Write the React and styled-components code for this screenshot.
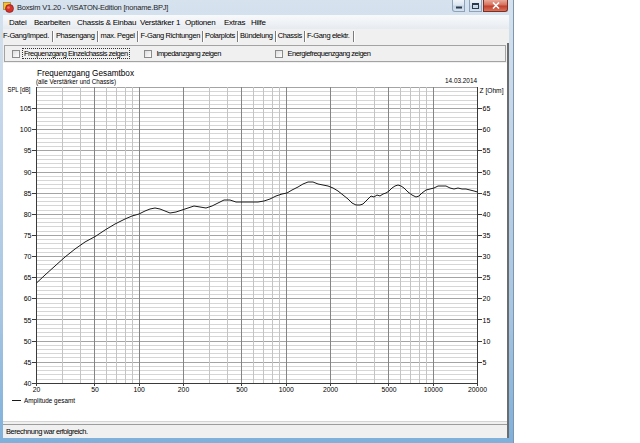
import React from 'react';
import styled, { createGlobalStyle } from 'styled-components';

const Global = createGlobalStyle`
  html, body { margin: 0; padding: 0; background: #fff; }
  body { font-family: "Liberation Sans", Arial, sans-serif; }
  #root { width: 640px; height: 443px; }
`;

const Screen = styled.div`
  width: 640px;
  height: 443px;
  background: #fff;
  display: flex;
  align-items: flex-start;
`;

const Window = styled.div`
  width: 514px;
  height: 443px;
  box-sizing: border-box;
  display: flex;
  flex-direction: column;
  padding: 0 4px 5px 3px;
  background: linear-gradient(180deg, #d6e2ee 0%, #c2d5e9 30%, #a8c6e2 70%, #7fb0da 100%);
  border-right: 1px solid #7d95ad;
  overflow: hidden;
`;

const TitleBar = styled.div`
  height: 15px;
  display: flex;
  align-items: center;
  flex-shrink: 0;
`;

const TitleText = styled.span`
  margin-left: 3px;
  font-size: 7.5px;
  letter-spacing: -0.2px;
  color: #1e1e1e;
  white-space: nowrap;
`;

const Controls = styled.div`
  margin-left: auto;
  margin-right: 1px;
  align-self: flex-start;
  display: flex;
  gap: 1px;
`;

const CtlButton = styled.div`
  width: ${p => p.$w}px;
  height: 12px;
  box-sizing: border-box;
  border: 1px solid ${p => (p.$close ? '#7e2f25' : '#8ea2b9')};
  border-top: none;
  border-radius: ${p => p.$radius};
  margin-left: ${p => p.$gap || 0}px;
  background: ${p =>
    p.$close
      ? 'linear-gradient(180deg, #e9a999 0%, #d7715e 45%, #c2412e 55%, #d8735a 100%)'
      : 'linear-gradient(180deg, #eef3f8 0%, #dbe5ef 45%, #c5d4e4 55%, #d6e2ee 100%)'};
  display: flex;
  align-items: center;
  justify-content: center;
`;

const MenuBar = styled.div`
  height: 14px;
  flex-shrink: 0;
  display: flex;
  align-items: center;
  padding-left: 6px;
  background: linear-gradient(180deg, #f8f9fb 0%, #eef1f5 60%, #e6ebf1 100%);
`;

const MenuItem = styled.span`
  width: ${p => p.$w}px;
  flex-shrink: 0;
  font-size: 8px;
  letter-spacing: -0.25px;
  color: #000;
  white-space: nowrap;
`;

const TabRow = styled.div`
  height: 14px;
  flex-shrink: 0;
  display: flex;
  align-items: stretch;
  background: #f0f0f0;
  padding-top: 2px;
  box-sizing: border-box;
`;

const Tab = styled.div`
  flex-shrink: 0;
  padding: 0 ${p => p.$right}px 0 ${p => p.$left}px;
  border-right: 1px solid #7b7b7b;
  box-shadow: 1px 0 0 #ffffff;
  font-size: 7.5px;
  letter-spacing: -0.35px;
  line-height: 10px;
  color: #000;
  white-space: nowrap;
  height: 11px;
`;

const Workspace = styled.div`
  flex: 1;
  display: flex;
  flex-direction: column;
  background: #f0f0f0;
  border-right: 2px solid #6c6c6c;
  min-height: 0;
`;

const CheckPanel = styled.div`
  height: 17px;
  margin: 2px 1px 1px 1px;
  box-sizing: border-box;
  border: 1px solid #a3a3a3;
  background: #f0f0f0;
  display: flex;
  align-items: center;
  padding-left: 7px;
  flex-shrink: 0;
`;

const CheckItem = styled.label`
  width: ${p => p.$w}px;
  flex-shrink: 0;
  display: flex;
  align-items: center;
`;

const Box = styled.span`
  width: 6px;
  height: 6px;
  border: 1px solid #8b8b8b;
  background: linear-gradient(135deg, #dcdcdc, #ffffff);
  box-sizing: content-box;
  flex-shrink: 0;
`;

const CheckLabel = styled.span`
  margin-left: ${p => (p.$focus ? 2 : 3)}px;
  padding: 1px 1px;
  border: 1px dotted ${p => (p.$focus ? '#333' : 'transparent')};
  font-size: 7.5px;
  letter-spacing: -0.5px;
  line-height: 7px;
  color: #000;
  white-space: nowrap;
`;

const ChartArea = styled.div`
  height: 358px;
  background: #fff;
  flex-shrink: 0;
  svg { display: block; }
`;

const Spacer = styled.div`
  height: 3px;
  flex-shrink: 0;
  border-top: 1px solid #d4d4d4;
  box-sizing: border-box;
`;

const StatusBar = styled.div`
  height: 14px;
  flex-shrink: 0;
  box-sizing: border-box;
  border-top: 1px solid #9d9d9d;
  background: #f0f0f0;
  display: flex;
  align-items: center;
  padding-left: 3px;
  font-size: 7.5px;
  letter-spacing: -0.45px;
  color: #000;
`;

/* ---------- chart ---------- */
const X0 = 36.5;
const XD = 147;
const fx = f => X0 + XD * Math.log10(f / 20);
const YB = 383.3;
const DB = 4.226;
const fy = db => YB - (db - 40) * DB;
const XR = fx(20000);
const YT = fy(110);
const r = v => Math.round(v - 0.5) + 0.5;

const LABELED = [20, 50, 100, 200, 500, 1000, 2000, 5000, 10000, 20000];
const FREQS = [];
[10, 100, 1000, 10000].forEach(d => {
  for (let m = 1; m <= 9; m++) {
    const f = m * d;
    if (f >= 20 && f <= 20000) FREQS.push(f);
  }
});
FREQS.push(20000);

const CURVE = [
  [36.5, 283], [45, 275], [55, 266], [65, 257], [75, 249], [85, 242], [96, 236],
  [105, 230], [115, 224], [125, 219], [132, 216], [139, 214], [145, 211], [150, 209],
  [155, 208], [160, 209], [165, 211], [170, 213], [176, 212], [182, 210], [188, 208],
  [194, 206], [200, 207], [206, 208], [212, 206], [218, 203], [224, 200], [230, 200],
  [236, 202], [242, 202], [250, 202], [258, 202], [264, 201], [270, 199], [276, 196],
  [282, 194], [287, 193], [292, 190], [298, 187], [303, 184], [308, 182], [313, 182],
  [318, 184], [323, 185], [328, 186], [333, 188], [338, 191], [343, 195], [348, 199],
  [352, 203], [356, 205], [360, 205], [363, 204], [366, 201], [369, 198], [371, 196],
  [374, 197], [377, 195], [380, 196], [383, 194], [386, 193], [389, 191], [392, 188],
  [395, 186], [398, 185], [401, 186], [404, 188], [408, 192], [412, 195], [416, 197],
  [419, 196], [422, 193], [426, 190], [430, 189], [434, 188], [438, 186], [442, 186],
  [446, 186], [450, 188], [454, 189], [458, 188], [462, 189], [466, 189], [470, 190],
  [474, 191], [477.5, 192],
];

function Chart() {
  const hLines = [];
  for (let d = 40; d <= 110; d++) hLines.push(d);
  const leftLabels = [105, 100, 95, 90, 85, 80, 75, 70, 65, 60, 55, 50, 45, 40];
  const rightLabels = [65, 60, 55, 50, 45, 40, 35, 30, 25, 20, 15, 10, 5];
  const textProps = { fontFamily: '"Liberation Sans", Arial, sans-serif', fill: '#000' };
  return (
    <svg width="504" height="358" viewBox="3 63 504 358">
      <g shapeRendering="crispEdges">
        {hLines.map(d => (
          <line key={'h' + d} x1={X0} x2={XR} y1={r(fy(d))} y2={r(fy(d))}
            stroke={d % 5 === 0 ? '#a4a4a4' : '#d6d6d6'} strokeWidth="1" />
        ))}
        {FREQS.map(f => (
          <line key={'v' + f} x1={r(fx(f))} x2={r(fx(f))} y1={YT} y2={YB}
            stroke={LABELED.includes(f) ? '#858585' : '#c4c4c4'} strokeWidth="1" />
        ))}
        <line x1={r(X0)} x2={r(X0)} y1={YT} y2={YB + 2} stroke="#3a3a3a" />
        <line x1={r(XR)} x2={r(XR)} y1={YT} y2={YB + 2} stroke="#3a3a3a" />
        <line x1={X0} x2={XR} y1={r(YB)} y2={r(YB)} stroke="#3a3a3a" />
        {leftLabels.map(v => (
          <line key={'lt' + v} x1={32} x2={r(X0)} y1={r(fy(v))} y2={r(fy(v))} stroke="#3a3a3a" />
        ))}
        {rightLabels.map(v => (
          <line key={'rt' + v} x1={r(XR)} x2={482} y1={r(fy(v + 40))} y2={r(fy(v + 40))} stroke="#3a3a3a" />
        ))}
        {LABELED.map(f => (
          <line key={'bt' + f} x1={r(fx(f))} x2={r(fx(f))} y1={r(YB)} y2={YB + 3} stroke="#3a3a3a" />
        ))}
      </g>
      <polyline points={CURVE.map(p => p.join(',')).join(' ')} fill="none"
        stroke="#1a1a1a" strokeWidth="1" strokeLinejoin="round" />

      <text x="37" y="75.5" fontSize="8.5" textLength="97" lengthAdjust="spacingAndGlyphs" {...textProps}>
        Frequenzgang Gesamtbox
      </text>
      <text x="36" y="84" fontSize="6.5" textLength="80" lengthAdjust="spacingAndGlyphs" {...textProps}>
        (alle Verstärker und Chassis)
      </text>
      <text x="7.5" y="91.5" fontSize="7" textLength="23" lengthAdjust="spacingAndGlyphs" {...textProps}>
        SPL [dB]
      </text>
      <text x="445" y="83.3" fontSize="7" textLength="32" lengthAdjust="spacingAndGlyphs" {...textProps}>
        14.03.2014
      </text>
      <text x="479.5" y="93.2" fontSize="7" textLength="24" lengthAdjust="spacingAndGlyphs" {...textProps}>
        Z [Ohm]
      </text>
      {leftLabels.map(v => (
        <text key={'ll' + v} x="31.5" y={fy(v) + 2.6} fontSize="7" textAnchor="end" {...textProps}>{v}</text>
      ))}
      {rightLabels.map(v => (
        <text key={'rl' + v} x="482.5" y={fy(v + 40) + 2.6} fontSize="7" {...textProps}>{v}</text>
      ))}
      {LABELED.map(f => (
        <text key={'xl' + f} x={fx(f)} y="392" fontSize="6.8" textAnchor="middle" {...textProps}>{String(f)}</text>
      ))}
      <line x1="12" x2="20.5" y1="400.5" y2="400.5" stroke="#1a1a1a" shapeRendering="crispEdges" />
      <text x="24" y="403" fontSize="7" textLength="51" lengthAdjust="spacingAndGlyphs" {...textProps}>
        Amplitude gesamt
      </text>
    </svg>
  );
}

function AppIcon() {
  return (
    <svg width="11" height="11" viewBox="0 0 11 11">
      <rect x="0.5" y="0.5" width="7" height="7" fill="#f2c230" stroke="#9a6a10" strokeWidth="0.6" />
      <circle cx="6.5" cy="6.5" r="4" fill="#d6322a" stroke="#7a1410" strokeWidth="0.6" />
      <circle cx="5.5" cy="5.5" r="1.3" fill="#f07a6a" />
    </svg>
  );
}

const MENU = [
  ['Datei', 25], ['Bearbeiten', 43], ['Chassis & Einbau', 63], ['Verstärker 1', 45],
  ['Optionen', 39], ['Extras', 27], ['Hilfe', 24],
];

const TABS = [
  ['F-Gang/Imped.', 0, 3], ['Phasengang', 3, 2], ['max. Pegel', 3, 2],
  ['F-Gang Richtungen', 3, 2], ['Polarplots', 2, 2], ['Bündelung', 2, 2],
  ['Chassis', 2, 2], ['F-Gang elektr.', 2, 3],
];

export default function App() {
  return (
    <Screen>
      <Global />
      <Window>
        <TitleBar>
          <AppIcon />
          <TitleText>Boxsim V1.20 - VISATON-Edition [noname.BPJ]</TitleText>
          <Controls>
            <CtlButton $w={13} $radius="0 0 0 3px">
              <svg width="6" height="6" viewBox="0 0 6 6"><rect x="0" y="3.5" width="6" height="2" fill="#2b3a4c" /></svg>
            </CtlButton>
            <CtlButton $w={13} $radius="0" $gap={3}>
              <svg width="7" height="6" viewBox="0 0 7 6"><rect x="0.5" y="0.5" width="6" height="5" fill="none" stroke="#2b3a4c" strokeWidth="1" /><rect x="0.5" y="0.5" width="6" height="1.5" fill="#2b3a4c" /></svg>
            </CtlButton>
            <CtlButton $w={25} $radius="0 0 3px 0" $close>
              <svg width="8" height="7" viewBox="0 0 8 7"><path d="M1 0.5 L7 6.5 M7 0.5 L1 6.5" stroke="#fff" strokeWidth="1.6" /></svg>
            </CtlButton>
          </Controls>
        </TitleBar>
        <MenuBar>
          {MENU.map(([t, w]) => <MenuItem key={t} $w={w}>{t}</MenuItem>)}
        </MenuBar>
        <TabRow>
          {TABS.map(([t, l, rr]) => <Tab key={t} $left={l} $right={rr}>{t}</Tab>)}
        </TabRow>
        <Workspace>
          <CheckPanel>
            <CheckItem $w={131.5}>
              <Box />
              <CheckLabel $focus>Frequenzgang Einzelchassis zeigen</CheckLabel>
            </CheckItem>
            <CheckItem $w={131}>
              <Box />
              <CheckLabel>Impedanzgang zeigen</CheckLabel>
            </CheckItem>
            <CheckItem $w={150}>
              <Box />
              <CheckLabel>Energiefrequenzgang zeigen</CheckLabel>
            </CheckItem>
          </CheckPanel>
          <ChartArea>
            <Chart />
          </ChartArea>
          <Spacer />
          <StatusBar>Berechnung war erfolgreich.</StatusBar>
        </Workspace>
      </Window>
    </Screen>
  );
}
